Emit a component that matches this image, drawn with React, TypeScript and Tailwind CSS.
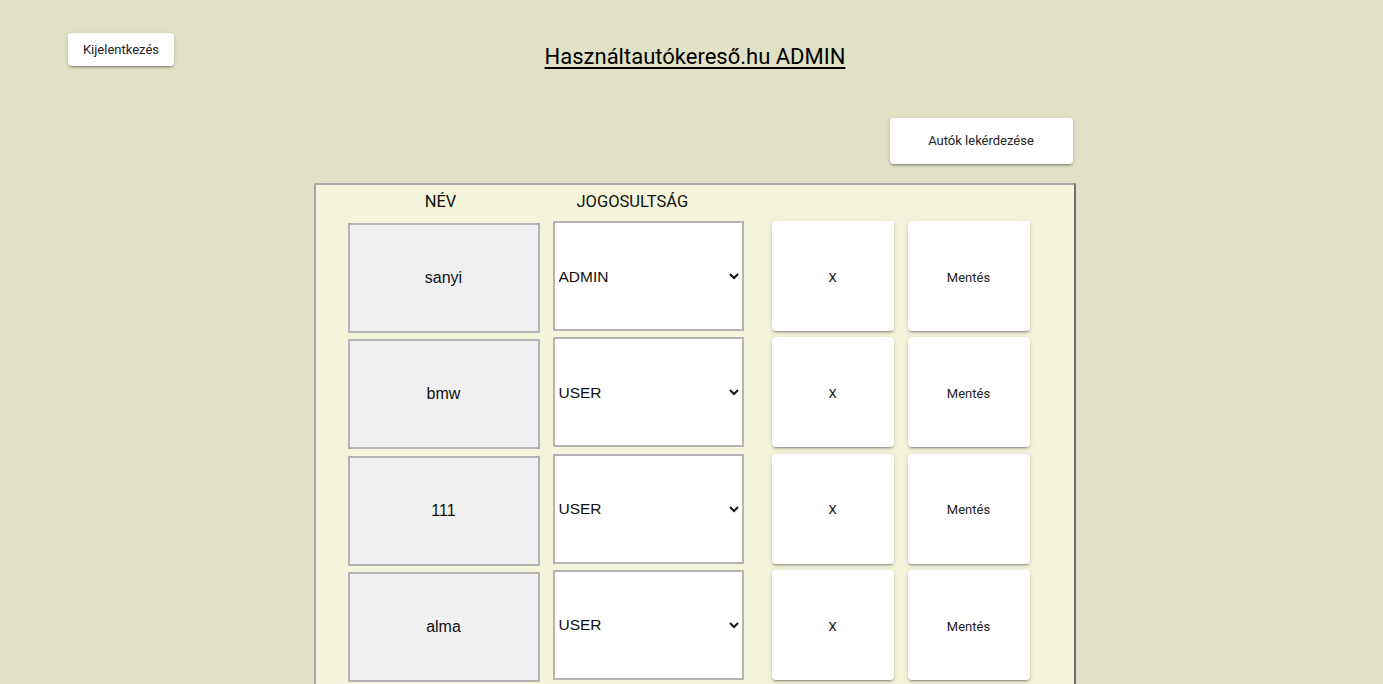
import React from "react";

const users = [
  { name: "sanyi", role: "ADMIN" },
  { name: "bmw", role: "USER" },
  { name: "111", role: "USER" },
  { name: "alma", role: "USER" },
];

const btnShadow =
  "shadow-[0_3px_1px_-2px_rgba(0,0,0,0.2),0_2px_2px_0_rgba(0,0,0,0.14),0_1px_5px_0_rgba(0,0,0,0.12)]";

export default function App() {
  return (
    <div className="min-h-screen w-full bg-[#e1e1c6] font-['Roboto',sans-serif] pb-10">
      <div className="relative flex h-[118px] justify-center">
        <button
          className={`absolute left-[68px] top-[33px] h-[33px] w-[106px] rounded-[4px] bg-white text-[13px] text-[#222] ${btnShadow}`}
        >
          Kijelentkezés
        </button>
        <h1 className="mt-[42px] h-fit text-[22px] leading-[30px] text-black underline underline-offset-[3px] decoration-[1.5px] pl-[7px]">
          Használtautókereső.hu ADMIN
        </h1>
      </div>
      <div className="pl-[6px]">
        <div className="mx-auto flex w-[762px] justify-end pl-[2px]">
          <button
            className={`mr-[3px] h-[46px] w-[183px] rounded-[4px] bg-white text-[13px] text-[#222] ${btnShadow}`}
          >
            Autók lekérdezése
          </button>
        </div>
        <div className="mx-auto mt-[19px] w-[762px] border-2 border-t-[#a9a9a9] border-l-[#a9a9a9] border-r-[#6f6f6f] border-b-[#6f6f6f] bg-[#f4f4da] pb-10 pl-[32px]">
          <div className="flex h-[36px] items-start pt-[7px] text-[16.5px] text-[#111] leading-[20px]">
            <div className="w-[186px] text-center">NÉV</div>
            <div className="ml-[43px] w-[111px] whitespace-nowrap text-center">JOGOSULTSÁG</div>
          </div>
          <div className="flex flex-col gap-[4.33px]">
            {users.map((u) => (
              <div key={u.name} className="flex items-start">
                <div className="mt-[2px] flex h-[110px] w-[192px] items-center justify-center border-2 border-[#b4b4b4] bg-[#f0f0f0] font-['Liberation_Sans',sans-serif] text-[16px] text-[#111]">
                  {u.name}
                </div>
                <select
                  defaultValue={u.role}
                  className="ml-[13px] h-[110px] w-[191px] border-2 border-[#b4b4b4] bg-white pl-0 pr-[2px] font-['Liberation_Sans',sans-serif] text-[15.5px] text-[#111] outline-none"
                >
                  <option value="ADMIN">ADMIN</option>
                  <option value="USER">USER</option>
                </select>
                <button
                  className={`ml-[28px] h-[110px] w-[122px] rounded-[4px] bg-white pt-[3px] text-[13px] text-[#111] ${btnShadow}`}
                >
                  X
                </button>
                <button
                  className={`ml-[14px] h-[110px] w-[122px] rounded-[4px] bg-white pt-[3px] text-[13px] text-[#222] ${btnShadow}`}
                >
                  Mentés
                </button>
              </div>
            ))}
          </div>
        </div>
      </div>
    </div>
  );
}
